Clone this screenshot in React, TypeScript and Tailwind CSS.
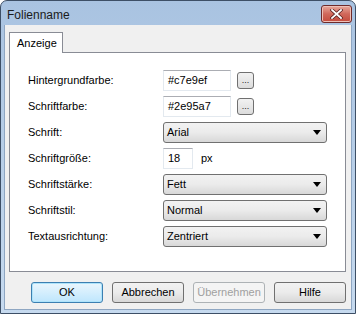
import React from 'react';

const font = { fontFamily: '"Liberation Sans", Arial, sans-serif' };

function TextBox({ value, w }: { value: string; w: string }) {
  return (
    <div className={`${w} h-[21px] bg-white border border-[#e3e9ef] border-t-[#abadb3] flex items-center pl-[4px] text-[11px] text-black`}>
      {value}
    </div>
  );
}

function DotsButton() {
  return (
    <div className="ml-[6px] w-[17px] h-[17px] rounded-[3px] border border-[#707070] bg-gradient-to-b from-[#f2f2f2] to-[#dcdcdc] flex items-end justify-center pb-[3px] text-[9px] leading-none text-[#222]">
      ...
    </div>
  );
}

function Select({ value }: { value: string }) {
  return (
    <div className="w-[164px] h-[21px] rounded-[3px] border border-[#707070] bg-gradient-to-b from-[#f2f2f2] via-[#ebebeb] to-[#d8d8d8] flex items-center justify-between pl-[3px] pr-[5px] text-[11px] text-black">
      <span>{value}</span>
      <svg width="8" height="5" viewBox="0 0 8 5">
        <path d="M0 0h8L4 5z" fill="#000" />
      </svg>
    </div>
  );
}

function Row({ label, children }: { label: string; children: React.ReactNode }) {
  return (
    <div className="h-[26px] flex items-center">
      <div className="w-[135px] text-[11px] text-black">{label}</div>
      {children}
    </div>
  );
}

function DlgButton({ label, kind }: { label: string; kind?: 'default' | 'disabled' }) {
  const cls =
    kind === 'default'
      ? 'border-[#3c7fb1] bg-gradient-to-b from-[#eaf6fd] to-[#bee6fd] text-black shadow-[inset_0_0_0_1px_#aee4fb]'
      : kind === 'disabled'
      ? 'border-[#adb2b5] bg-[#f4f4f4] text-[#a0a0a0]'
      : 'border-[#707070] bg-gradient-to-b from-[#f2f2f2] via-[#ebebeb] to-[#d8d8d8] text-black';
  return (
    <div className={`w-[72px] h-[21px] rounded-[3px] border flex items-center justify-center text-[11px] ${cls}`}>
      {label}
    </div>
  );
}

export default function App() {
  return (
    <div className="w-[356px] h-[315px] bg-white" style={font}>
      <div className="w-[356px] h-[314px] rounded-t-[7px] border border-[#3d4f66] bg-gradient-to-b from-[#a9c3e1] to-[#c6daef] flex flex-col">
        {/* title bar */}
        <div className="h-[24px] flex items-start justify-between">
          <div className="pl-[6px] pt-[5px] text-[12px] text-[#1b1b1b]">Folienname</div>
          <div className="mt-[4px] mr-[3px] w-[31px] h-[18px] rounded-[3px] border border-[#6e2a2a] bg-gradient-to-b from-[#e7a89c] via-[#d0675a] to-[#c44a3c] flex items-center justify-center shadow-[inset_0_0_0_1px_#eec0b7]">
            <svg width="13" height="10" viewBox="0 0 13 10">
              <path d="M2 1l9 8M11 1l-9 8" stroke="#5a2222" strokeWidth="3.4" strokeLinecap="square" />
              <path d="M2 1l9 8M11 1l-9 8" stroke="#ffffff" strokeWidth="1.8" strokeLinecap="square" />
            </svg>
          </div>
        </div>
        {/* client */}
        <div className="flex-1 mx-[3px] mb-[3px] bg-[#f0f0f0] border border-[#8ea6c2] border-t-0 flex flex-col pt-[7px] pl-[4px] pr-[5px] pb-[6px]">
          <div className="relative z-10 -mb-px w-[54px] h-[21px] bg-white border border-[#898c95] border-b-0 flex items-center pl-[7px] text-[11px] text-black">
            Anzeige
          </div>
          <div className="flex-1 bg-white border border-[#898c95] pt-[14px] pl-[18px]">
            <Row label="Hintergrundfarbe:">
              <TextBox value="#c7e9ef" w="w-[68px]" />
              <DotsButton />
            </Row>
            <Row label="Schriftfarbe:">
              <TextBox value="#2e95a7" w="w-[68px]" />
              <DotsButton />
            </Row>
            <Row label="Schrift:">
              <Select value="Arial" />
            </Row>
            <Row label="Schriftgröße:">
              <TextBox value="18" w="w-[30px]" />
              <span className="ml-[8px] text-[11px] text-black">px</span>
            </Row>
            <Row label="Schriftstärke:">
              <Select value="Fett" />
            </Row>
            <Row label="Schriftstil:">
              <Select value="Normal" />
            </Row>
            <Row label="Textausrichtung:">
              <Select value="Zentriert" />
            </Row>
          </div>
          <div className="mt-[10px] flex justify-end gap-[9px]">
            <DlgButton label="OK" kind="default" />
            <DlgButton label="Abbrechen" />
            <DlgButton label="Übernehmen" kind="disabled" />
            <DlgButton label="Hilfe" />
          </div>
        </div>
      </div>
    </div>
  );
}
